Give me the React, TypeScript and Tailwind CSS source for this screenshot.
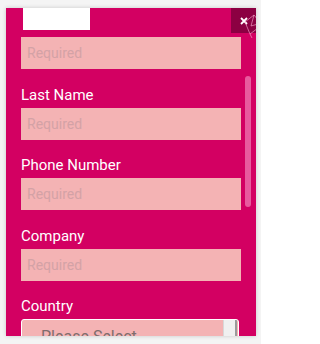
import React from "react";

const FIELDS = ["Last Name", "Phone Number", "Company"];

function RequiredInput() {
  return (
    <input
      type="text"
      placeholder="Required"
      className="block h-[32px] w-[220px] bg-[#f4b3b4] px-[6px] text-[14px] text-[#6b4b4b] outline-none placeholder:text-[#d3a2a6]"
    />
  );
}

function FieldLabel({ children }: { children: React.ReactNode }) {
  return (
    <label className="mb-[3px] mt-[15.5px] block h-[20px] text-[15px] leading-[20px] text-white">
      {children}
    </label>
  );
}

export default function App() {
  return (
    <div
      className="h-[344px] w-[261px] overflow-hidden bg-[#f4f4f4] pl-[6px] pt-[8px]"
      style={{ fontFamily: "Roboto, 'Liberation Sans', sans-serif" }}
    >
      <div className="relative h-[328px] w-[250px] overflow-hidden bg-[#d30062] shadow-[0_0_4px_rgba(0,0,0,0.18)]">
        <div className="flex flex-col px-[15px]">
          {/* logo, cut off by the scroll position */}
          <div className="mb-[7px] ml-[2px] h-[22px] w-[67px] bg-white" />
          <RequiredInput />
          {FIELDS.map((label) => (
            <div key={label}>
              <FieldLabel>{label}</FieldLabel>
              <RequiredInput />
            </div>
          ))}
          <FieldLabel>Country</FieldLabel>
          <div className="flex h-[34px] w-[218px] items-stretch overflow-hidden rounded-[3px] border border-white bg-[#f4b3b4]">
            <span className="flex-1 pl-[19px] pt-[7px] text-[16px] leading-[20px] text-[#7f6d6d]">
              Please Select
            </span>
            <div className="mr-[1px] flex w-[14px] flex-col justify-end border-l border-r-2 border-l-[#d8d8d8] border-r-[#9a9a9a] bg-[#f0f0f0] pb-[14px] pl-[3px]">
              <div className="h-[2px] w-[5px] bg-black" />
            </div>
          </div>
        </div>

        {/* scrollbar */}
        <div className="absolute left-[239px] top-[68px] h-[131px] w-[6px] rounded-full bg-[#e85a9e]" />

        {/* close */}
        <button
          type="button"
          className="absolute right-0 top-0 flex h-[25px] w-[25px] items-center justify-center bg-[#8c0042] text-white"
        >
          <svg width="8" height="8" viewBox="0 0 8 8">
            <path d="M1 1 L7 7 M7 1 L1 7" stroke="white" strokeWidth="1.8" />
          </svg>
        </button>
        <svg
          className="absolute right-[-2px] top-[4px]"
          width="16"
          height="26"
          viewBox="0 0 16 26"
        >
          <path
            d="M3 10 L12 3 L16 8 M3 10 L8 22 L16 16 M8 22 L10 26 M12 3 L9 14 L16 12"
            fill="none"
            stroke="#f6a3c9"
            strokeWidth="0.8"
            opacity="0.8"
          />
        </svg>
      </div>
    </div>
  );
}
